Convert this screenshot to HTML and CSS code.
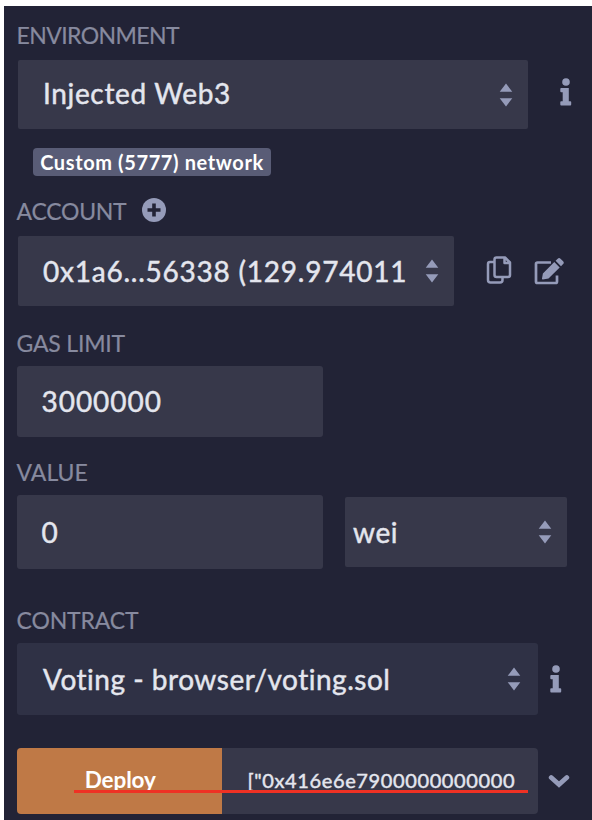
FILE: index.html
```html
<!DOCTYPE html>
<html lang="en">
<head>
<meta charset="utf-8">
<title>Deploy</title>
<link rel="stylesheet" href="styles.css">
</head>
<body>
<svg class="defs" width="0" height="0">
  <symbol id="sort" viewBox="0 0 14 26"><path d="M7 1.500 13.300 9.800H.7zM.7 16.200h12.600L7 24.500z" fill="currentColor"/></symbol>
  <symbol id="info" viewBox="0 0 12 28"><circle cx="6" cy="4" r="3.800" fill="currentColor"/><path d="M1.200 10h7.600v13.200h1.500q.9 0 .9.9v2.400q0 .9-.9.9H1.200q-.9 0-.9-.9v-2.400q0-.9.9-.9h1.500v-9H1.200q-.9 0-.9-.9V10.900q0-.9.9-.9z" fill="currentColor"/></symbol>
</svg>
<main class="panel">
  <div class="label env-label"><span class="t-env">ENVIRONMENT</span></div>
  <div class="row">
    <div class="box select env"><span class="t-inj">Injected Web3</span><svg class="sort"><use href="#sort"/></svg></div>
    <svg class="info info-env"><use href="#info"/></svg>
  </div>
  <div class="badge"><span class="t-badge">Custom (5777) network</span></div>
  <div class="label acc-label"><span class="t-acc">ACCOUNT</span>
    <svg class="plus" viewBox="0 0 24 24"><circle cx="12" cy="12" r="12" fill="currentColor"/><path d="M12 5.500v13M5.500 12h13" stroke="#222336" stroke-width="3.600"/></svg>
  </div>
  <div class="row">
    <div class="box select account"><span class="t-addr">0x1a6...56338 (129.974011</span><svg class="sort"><use href="#sort"/></svg></div>
    <svg class="copy" viewBox="0 0 26 28" fill="none" stroke="currentColor" stroke-width="2.500" stroke-linejoin="round"><path d="M8 6H4Q2 6 2 8v16q0 2.500 2.500 2.500H14q2.500 0 2.500-2.500v-3"/><path d="M10.500 1.500H19l5 5V19q0 2-2 2H10.500q-2 0-2-2V3.500q0-2 2-2zM18.500 1.500V7H24"/></svg>
    <svg class="edit" viewBox="0 0 30 28"><path d="M17 5.500H3.500q-1.500 0-1.500 1.500V24.500q0 1.500 1.500 1.500h18q1.500 0 1.500-1.500v-6" fill="none" stroke="currentColor" stroke-width="2.700"/><path d="M20.300 5l5.400 5.400L14.500 21.500l-5.700 1q-.9 0-.8-.9l.9-5.200zM21.600 3.800l2.100-2.100q1.400-1.400 2.800 0l2.600 2.600q1.400 1.400 0 2.800l-2.100 2.100z" fill="currentColor"/></svg>
  </div>
  <div class="label gas-label"><span class="t-gas">GAS LIMIT</span></div>
  <div class="box input gas"><span class="t-num">3000000</span></div>
  <div class="label value-label"><span class="t-value">VALUE</span></div>
  <div class="row">
    <div class="box input value"><span class="t-zero">0</span></div>
    <div class="box select unit"><span class="t-wei">wei</span><svg class="sort"><use href="#sort"/></svg></div>
  </div>
  <div class="label contract-label"><span class="t-contract">CONTRACT</span></div>
  <div class="row">
    <div class="box select contract"><span class="t-voting">Voting - browser/voting.sol</span><svg class="sort"><use href="#sort"/></svg></div>
    <svg class="info info-contract"><use href="#info"/></svg>
  </div>
  <div class="row deploy-row">
    <div class="deploy"><span class="t-deploy">Deploy</span></div>
    <div class="box args"><span class="t-args">["0x416e6e7900000000000</span></div>
    <svg class="chevron" viewBox="0 0 22 16"><path d="M3.200 4.500l7.800 7 7.800-7" fill="none" stroke="currentColor" stroke-width="4.800" stroke-linecap="round"/></svg>
    <div class="underline"></div>
  </div>
</main>
</body>
</html>
```
FILE: styles.css
```css
* { box-sizing: border-box; }
body { margin: 0; background: #fff; font-family: Lato, "Open Sans", sans-serif; font-variant-ligatures: none; overflow: hidden; }
.defs { position: absolute; }
.panel { margin: 6px 0 0 4px; height: 814px; padding-left: 12.500px; background: #222336; color: #959bb9; overflow: hidden; }
.row { display: flex; align-items: center; }
.row svg, .label svg { flex: none; }
.label { display: flex; align-items: center; color: #878a9f; font-size: 23px; line-height: 30px; white-space: nowrap; -webkit-text-stroke: 0.2px #878a9f; }
.env-label { height: 54px; padding-top: 3px; }
.acc-label { height: 60px; padding-top: 9px; }
.gas-label { height: 60px; padding-top: 13px; }
.value-label { height: 58px; padding-top: 12px; }
.contract-label { height: 74px; padding-top: 27px; }
.box { display: flex; align-items: center; flex: none; background: #37384a; border-radius: 3px; color: #e4e6ee; font-size: 28px; white-space: nowrap; -webkit-text-stroke: 0.45px #e4e6ee; }
.select { justify-content: space-between; border-radius: 2px; }
.sort { width: 14px; height: 26px; color: #959bb9; -webkit-text-stroke: 0; }
.env { width: 510px; height: 69px; margin-left: 1.500px; padding: 0 15px 0 25px; }
.info { width: 12px; height: 28px; }
.info-env { margin: -6px 0 0 32px; }
.badge { display: flex; align-items: center; justify-content: center; width: 238px; height: 28px; margin: 19px 0 0 16.500px; background: #595c76; border-radius: 4px; color: #fff; font-size: 20px; font-weight: 700; white-space: nowrap; }
.plus { width: 24px; height: 24px; margin: -1px 0 0 16px; color: #959bb9; }
.account { width: 436px; height: 70px; margin-left: 1.500px; padding: 0 15px 0 25px; }
.copy { width: 26px; height: 28px; margin: -3px 0 0 32px; }
.edit { width: 30px; height: 28px; margin: -1px 0 0 22px; }
.input { width: 306px; padding-left: 25px; }
.gas { height: 71px; }
.value { height: 74px; }
.unit { width: 222px; height: 70px; margin-left: 22.500px; padding: 0 15px 0 8px; }
.contract { width: 521.500px; height: 72px; padding: 0 17px 0 26.500px; background: #2f3145; border-radius: 3px; }
.info-contract { margin-left: 12px; }
.deploy-row { position: relative; margin-top: 33px; }
.deploy { display: flex; align-items: center; justify-content: center; width: 205.500px; height: 66px; padding: 0 0 4px 2px; background: #bf7946; border-radius: 4px 0 0 4px; color: #fff; font-size: 22.500px; font-weight: 700; }
.args { width: 316px; height: 66px; padding: 0 0 3px 25.500px; border-radius: 0 4px 4px 0; font-size: 20px; }
.chevron { width: 22px; height: 16px; margin-left: 10px; }
.underline { position: absolute; left: 57.500px; top: 42px; width: 454px; height: 3px; background: #ef3124; }

.t-env { letter-spacing: -0.57px; }
.t-acc { letter-spacing: -0.25px; }
.t-gas { letter-spacing: -0.2px; }
.t-contract { letter-spacing: -0.15px; }
.t-inj { letter-spacing: 0.65px; padding-bottom: 4px; }
.t-badge { letter-spacing: 0.62px; padding-bottom: 1px; }
.t-addr { letter-spacing: 0.77px; }
.t-num { letter-spacing: 0.95px; padding-bottom: 2px; }
.t-wei { letter-spacing: 0.6px; }
.t-voting { letter-spacing: 0.52px; padding-bottom: 1px; }
.t-args { letter-spacing: 0.62px; }
.t-deploy { letter-spacing: -0.1px; }
```
